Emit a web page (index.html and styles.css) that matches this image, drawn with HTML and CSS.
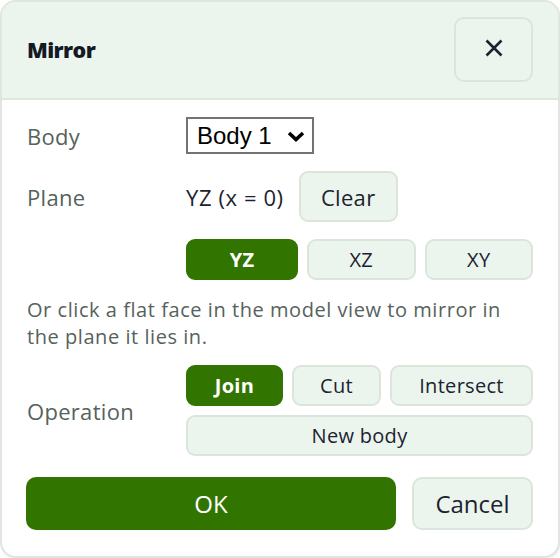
FILE: index.html
```html
<!DOCTYPE html>
<html lang="en">
<head>
<meta charset="utf-8">
<title>Mirror</title>
<link rel="stylesheet" href="styles.css">
</head>
<body>
<div class="dialog">
  <header class="dialog-header">
    <h1 class="title">Mirror</h1>
    <button class="close-btn" aria-label="Close">
      <svg width="18" height="18" viewBox="0 0 18 18"><path d="M1.5 1.5 L16.5 16.5 M16.5 1.5 L1.5 16.5" stroke="#1c2330" stroke-width="2.6" fill="none"/></svg>
    </button>
  </header>
  <div class="dialog-body">
    <div class="form">
      <div class="label">Body</div>
      <div class="field">
        <div class="select"><span>Body 1</span><svg width="18" height="11" viewBox="0 0 18 11"><path d="M2 2 L9 8.5 L16 2" stroke="#000" stroke-width="3.6" fill="none"/></svg></div>
      </div>
      <div class="label">Plane</div>
      <div class="field plane-value">
        <span class="value">YZ (x = 0)</span>
        <button class="btn btn-light clear">Clear</button>
      </div>
      <div></div>
      <div class="field triple">
        <button class="btn btn-green seg">YZ</button>
        <button class="btn btn-light seg">XZ</button>
        <button class="btn btn-light seg">XY</button>
      </div>
    </div>
    <p class="hint">Or click a flat face in the model view to mirror in the plane it lies in.</p>
    <div class="form op-form">
      <div class="label">Operation</div>
      <div class="field ops">
        <button class="btn btn-green seg">Join</button>
        <button class="btn btn-light seg">Cut</button>
        <button class="btn btn-light seg">Intersect</button>
        <button class="btn btn-light seg wide">New body</button>
      </div>
    </div>
    <div class="footer">
      <button class="btn btn-green big">OK</button>
      <button class="btn btn-light big">Cancel</button>
    </div>
  </div>
</div>
</body>
</html>
```
FILE: styles.css
```css
html, body {
  margin: 0;
  padding: 0;
  background: #ffffff;
}
body {
  font-family: "Open Sans", "Noto Sans", sans-serif;
  color: #1c2330;
}
.dialog {
  box-sizing: border-box;
  width: 560px;
  height: 558px;
  border: 2px solid #dfe5df;
  border-radius: 16px;
  overflow: hidden;
  background: #fff;
  box-shadow: 1px 2px 2px rgba(0,0,0,0.06);
}
.dialog-header {
  display: flex;
  align-items: center;
  justify-content: space-between;
  background: #ebf5ed;
  border-bottom: 2px solid #dfe7e0;
  padding: 15px 25px 16px 25px;
}
.title {
  margin: 0;
  font-size: 21.5px;
  font-weight: 800;
  letter-spacing: -0.6px;
  color: #141a24;
}
.close-btn {
  width: 79px;
  height: 65px;
  border: 2px solid #dbe5dc;
  border-radius: 10px;
  background: #ebf5ed;
  display: flex;
  align-items: center;
  justify-content: center;
  padding: 0 0 4px 0;
}
.dialog-body {
  padding: 17px 25px 0 25px;
}
.form {
  display: grid;
  grid-template-columns: 159px 1fr;
  row-gap: 17px;
  align-items: center;
}
.label {
  font-size: 22px;
  letter-spacing: 0.3px;
  color: #56625b;
}
.field {
  display: flex;
  align-items: center;
}
.select {
  box-sizing: border-box;
  width: 128px;
  height: 37px;
  border: 2px solid #737373;
  display: flex;
  align-items: center;
  justify-content: space-between;
  padding: 0 7px 0 9px;
  font-family: "Liberation Sans", Arial, sans-serif;
  font-size: 24px;
  color: #000;
}
.select svg {
  margin-top: 1px;
}
.plane-value .value {
  font-size: 22px;
  letter-spacing: 0.6px;
  color: #1c2330;
  margin-right: 15px;
}
.btn {
  font-family: "Open Sans", "Noto Sans", sans-serif;
  box-sizing: border-box;
  border-radius: 9px;
  padding: 0;
  cursor: pointer;
}
.btn-light {
  background: #ebf5ed;
  border: 2px solid #dbe5dc;
  color: #1c2330;
}
.btn-green {
  background: #327400;
  border: 2px solid #327400;
  color: #fff;
  font-weight: 700;
}
.clear {
  width: 99px;
  height: 51px;
  font-size: 22px;
  letter-spacing: 0.3px;
}
.triple {
  display: grid;
  grid-template-columns: 112px 1fr 1fr;
  column-gap: 9px;
}
.seg {
  height: 41px;
  font-size: 20px;
  letter-spacing: 0.3px;
}
.hint {
  margin: 16px 0 0 0;
  font-size: 20px;
  letter-spacing: 0.55px;
  line-height: 27px;
  color: #56625b;
}
.op-form {
  margin-top: 15px;
}
.ops {
  display: grid;
  grid-template-columns: 97px 89px 1fr;
  column-gap: 9px;
  row-gap: 9px;
}
.ops .wide {
  grid-column: 1 / 4;
}
.footer {
  margin-top: 21px;
  display: grid;
  grid-template-columns: 1fr 121px;
  column-gap: 16px;
  margin-left: -1px;
}
.big {
  height: 53px;
  font-size: 24px;
  border-radius: 10px;
}
.footer .btn-green {
  font-weight: 400;
}
```
